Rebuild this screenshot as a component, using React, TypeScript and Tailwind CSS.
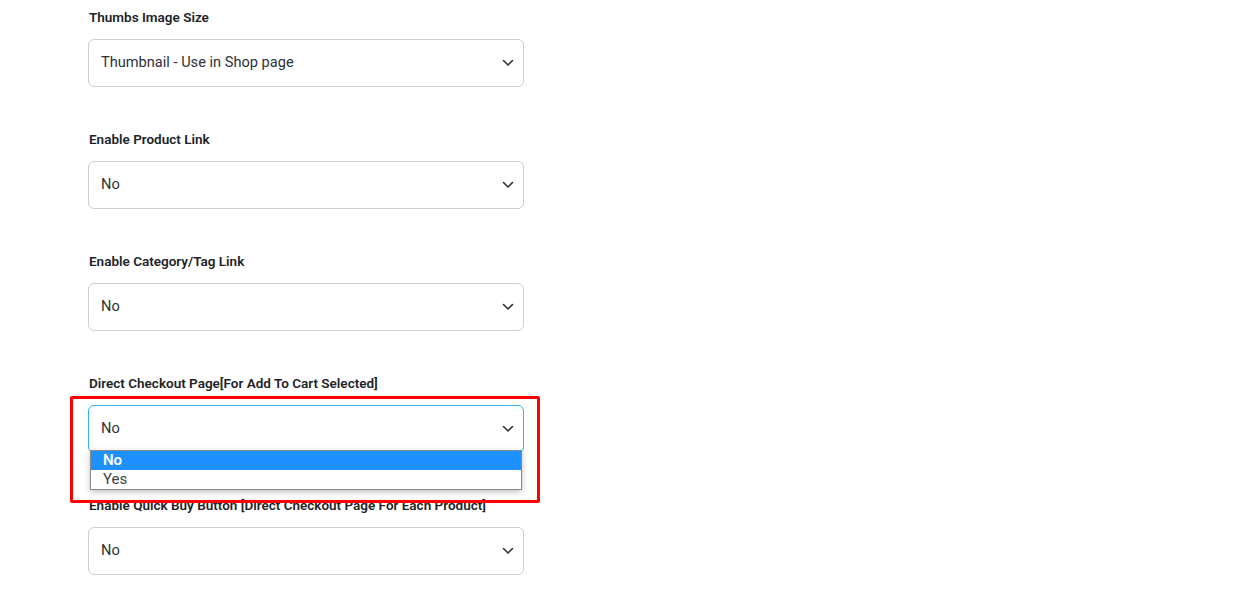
import React from 'react';

const fields = [
    { label: 'Thumbs Image Size', value: 'Thumbnail - Use in Shop page' },
    { label: 'Enable Product Link', value: 'No' },
    { label: 'Enable Category/Tag Link', value: 'No' },
    { label: 'Direct Checkout Page[For Add To Cart Selected]', value: 'No', open: true },
    { label: 'Enable Quick Buy Button [Direct Checkout Page For Each Product]', value: 'No' },
];

function Chevron() {
    return (
        <svg width="12" height="8" viewBox="0 0 12 8" fill="none" className="shrink-0">
            <path d="M1.5 1.5 L6 6 L10.5 1.5" stroke="#2c3338" strokeWidth="1.6" strokeLinecap="round" strokeLinejoin="round" />
        </svg>
    );
}

export default function App() {
    return (
        <div className="relative min-h-[606px] bg-white font-['Roboto','Liberation_Sans',sans-serif]">
            <div className="pl-[88px] pt-[6px]">
                {fields.map((f) => (
                    <div key={f.label} className="mb-[41px] w-[436px]">
                        <div className="h-[22px] whitespace-nowrap pl-px text-[13.5px] leading-[22px] font-semibold text-[#1d2327]">{f.label}</div>
                        <div className="relative mt-[11px]">
                            <div
                                className={`flex h-[48px] items-center justify-between rounded-md border bg-white pl-[12px] pr-[9px] text-[14.6px] text-[#2c3338] ${f.open ? 'border-[#33b5e5]' : 'border-[#cfcfcf]'}`}
                            >
                                <span>{f.value}</span>
                                <Chevron />
                            </div>
                            {/* open options list */}
                            {f.open && (
                                <div className="absolute left-[2px] top-[45px] z-10 w-[432px] border border-[#8a8a8a] bg-white text-[15px] leading-[19px] shadow-[0_2px_6px_rgba(0,0,0,0.25)]">
                                    <div className="bg-[#1e90ff] pl-3 font-semibold text-white">No</div>
                                    <div className="pl-3 text-[#3c434a]">Yes</div>
                                </div>
                            )}
                        </div>
                    </div>
                ))}
            </div>
            {/* highlight annotation */}
            <div className="pointer-events-none absolute left-[70px] top-[396px] z-20 h-[107px] w-[470px] rounded-[2px] border-[3px] border-[#ff0000]" />
        </div>
    );
}
